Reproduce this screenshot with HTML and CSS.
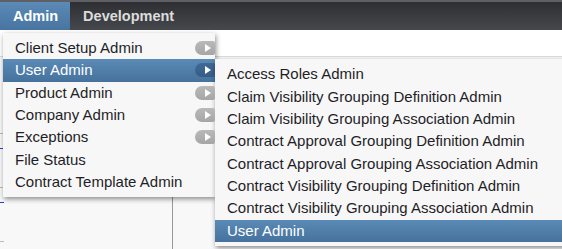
FILE: index.html
```html
<!DOCTYPE html>
<html>
<head>
<meta charset="utf-8">
<link rel="stylesheet" href="styles.css">
</head>
<body>
<div class="nav">
  <div class="tab active">Admin
    <ul class="menu main">
      <li>Client Setup Admin<span class="arr"></span></li>
      <li class="hi">User Admin<span class="arr"></span>
        <ul class="menu sub">
          <li>Access Roles Admin</li>
          <li>Claim Visibility Grouping Definition Admin</li>
          <li>Claim Visibility Grouping Association Admin</li>
          <li>Contract Approval Grouping Definition Admin</li>
          <li>Contract Approval Grouping Association Admin</li>
          <li>Contract Visibility Grouping Definition Admin</li>
          <li>Contract Visibility Grouping Association Admin</li>
          <li class="hi">User Admin</li>
        </ul>
      </li>
      <li>Product Admin<span class="arr"></span></li>
      <li>Company Admin<span class="arr"></span></li>
      <li>Exceptions<span class="arr"></span></li>
      <li>File Status</li>
      <li>Contract Template Admin</li>
    </ul>
  </div>
  <div class="tab">Development</div>
</div>
<div class="band"></div>
<div class="content">
  <div class="rows">
    <div class="row"></div>
    <div class="row link"></div>
    <div class="row"></div>
    <div class="row link"></div>
    <div class="row"></div>
  </div>
  <div class="col"></div>
</div>
</body>
</html>
```
FILE: styles.css
```css
html, body { margin: 0; padding: 0; }
body {
  font-family: "Liberation Sans", Arial, sans-serif;
  background: #fff;
  width: 562px;
  height: 249px;
  overflow: hidden;
}
.nav {
  display: flex;
  height: 28px;
  border-top: 2px solid #5e6063;
  background: linear-gradient(#2e2f32, #45484c);
  position: relative;
  z-index: 5;
}
.tab {
  position: relative;
  font-weight: bold;
  font-size: 14.5px;
  line-height: 28px;
  color: #dcdcdc;
  padding: 0 11px 0 13px;
}
.tab.active {
  color: #fff;
  padding-right: 12px;
  background: linear-gradient(#5a8ab6, #4874a0);
}
.band { height: 26px; border-bottom: 1px solid #dcdcdc; box-shadow: 0 1px 1px #eee; }
.content { display: flex; background: #f8f8f8; height: 192px; }
.rows { width: 4px; padding-top: 50px; display: flex; flex-direction: column; }
.row { height: 26px; border-bottom: 1px solid #bbb; }
.row.link { border-bottom: 1px solid #2b3fd0; height: 14px; margin-bottom: 12px; }
.col { margin-left: 168px; margin-top: 138px; width: 1px; background: #999; height: 54px; }
.menu {
  list-style: none;
  margin: 0;
  padding: 4px 0;
  position: absolute;
  background: #f7f7f7;
  box-shadow: 1px 2px 5px rgba(0,0,0,0.45);
  font-weight: normal;
  font-size: 15px;
  color: #1e1e28;
}
.menu li {
  position: relative;
  height: 22.35px;
  line-height: 22.35px;
  padding-left: 12px;
  white-space: nowrap;
}
.menu li.hi {
  background: linear-gradient(#5a8ab6, #46729d);
  color: #fff;
}
.main { left: 3px; top: 31px; width: 212px; }
.sub { left: 212px; top: 0; width: 360px; color: #1e1e28; }
.arr {
  position: absolute;
  right: 0;
  top: 4px;
  width: 20px;
  height: 14px;
  border-radius: 7px 2px 2px 7px;
  background: linear-gradient(#b9b9b9, #a6a6a6);
}
.arr::after {
  content: "";
  position: absolute;
  left: 10px;
  top: 3px;
  border-left: 6px solid #fff;
  border-top: 4px solid transparent;
  border-bottom: 4px solid transparent;
}
.hi > .arr { background: linear-gradient(#3f6994, #355d86); }
```
